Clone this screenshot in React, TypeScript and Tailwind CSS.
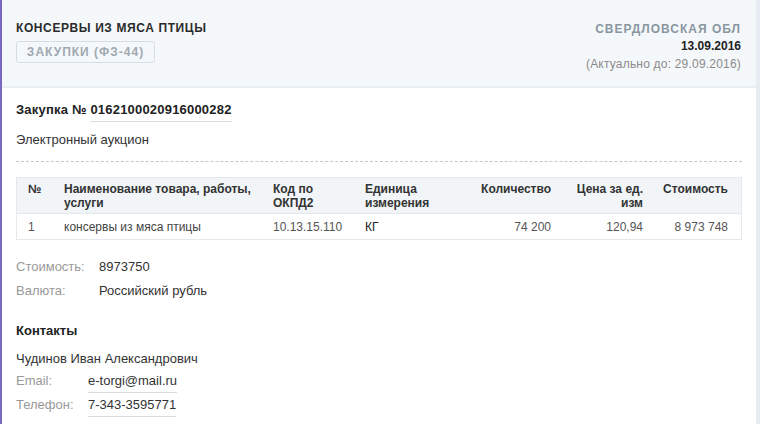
import React from "react";

const font = { fontFamily: '"Liberation Sans", Arial, sans-serif' };

export default function App() {
  return (
    <div className="w-[760px] h-[424px] overflow-hidden bg-white flex" style={font}>
      <div className="w-[2px] bg-[#7b68c0] shrink-0" />
      <div className="flex-1 flex flex-col border-r-[4px] border-[#e6ecf1]">
        <div className="h-[88px] bg-[#f5f8fb] border-b-2 border-[#e8eef3] flex justify-between px-[14px] pt-[20px]">
          <div className="flex flex-col items-start">
            <div className="text-[12px] font-bold tracking-[0.6px] text-[#2b2b2b] leading-[16px]">КОНСЕРВЫ ИЗ МЯСА ПТИЦЫ</div>
            <div className="mt-[5px] h-[22px] w-[139px] border border-[#d6dde3] rounded-[3px] text-[12px] font-bold tracking-[1px] text-[#a0a9b0] flex items-center justify-center">
              ЗАКУПКИ (ФЗ-44)
            </div>
          </div>
          <div className="flex flex-col items-end pr-[1px] pt-[1px]">
            <div className="text-[12px] font-bold tracking-[1px] text-[#8a969f] leading-[16px]">СВЕРДЛОВСКАЯ ОБЛ</div>
            <div className="text-[12px] font-bold text-[#222] leading-[17px] mt-[1px]">13.09.2016</div>
            <div className="text-[12px] tracking-[0.2px] text-[#8a8a8a] leading-[17px] mt-[1px]">(Актуально до: 29.09.2016)</div>
          </div>
        </div>
        <div className="px-[14px] pt-[13px] flex flex-col">
          <div className="text-[13px] font-bold tracking-[0.2px] text-[#222] leading-[18px] flex">
            <span>Закупка №&nbsp;</span>
            <span className="border-b border-[#d8dde2] pb-[2px]">0162100020916000282</span>
          </div>
          <div className="mt-[9px] text-[13px] text-[#333] leading-[18px]">Электронный аукцион</div>
          <div className="mt-[12px] border-t border-dashed border-[#c6c6c6]" />
          <div className="mt-[15px] border border-[#e4e9ee] text-[12px] w-[726px]">
            <div className="grid grid-cols-[47px_209px_92px_91px_95px_92px_85px] bg-[#f1f5f8] h-[35px] pt-[4px] leading-[14px] text-[#333] font-bold">
              <div className="pl-[11px]">№</div>
              <div>Наименование товара, работы,<br />услуги</div>
              <div>Код по<br />ОКПД2</div>
              <div>Единица<br />измерения</div>
              <div className="text-right">Количество</div>
              <div className="text-right">Цена за ед.<br />изм</div>
              <div className="text-right">Стоимость</div>
            </div>
            <div className="grid grid-cols-[47px_209px_92px_91px_95px_92px_85px] h-[26px] items-center text-[#444] border-t border-[#e4e9ee]">
              <div className="pl-[11px] text-[#555]">1</div>
              <div>консервы из мяса птицы</div>
              <div className="text-[#555]">10.13.15.110</div>
              <div className="text-[#222]">КГ</div>
              <div className="text-right text-[#555]">74 200</div>
              <div className="text-right text-[#555]">120,94</div>
              <div className="text-right text-[#555]">8 973 748</div>
            </div>
          </div>
          <div className="mt-[15px] text-[13px] leading-[24px]">
            <div className="flex"><span className="w-[83px] text-[#999]">Стоимость:</span><span className="text-[#333]">8973750</span></div>
            <div className="flex"><span className="w-[83px] text-[#999]">Валюта:</span><span className="text-[#333]">Российский рубль</span></div>
          </div>
          <div className="mt-[19px] text-[13px] font-bold text-[#222] leading-[18px]">Контакты</div>
          <div className="mt-[10px] text-[13px] text-[#333] leading-[18px]">Чудинов Иван Александрович</div>
          <div className="text-[13px] leading-[24px] mt-[1px]">
            <div className="flex"><span className="w-[72px] text-[#999]">Email:</span><span className="text-[#333] border-b border-[#d8dde2] leading-[17px] mt-[3px]">e-torgi@mail.ru</span></div>
            <div className="flex"><span className="w-[72px] text-[#999]">Телефон:</span><span className="text-[#333] border-b border-[#d8dde2] leading-[17px] mt-[3px]">7-343-3595771</span></div>
          </div>
        </div>
      </div>
    </div>
  );
}
